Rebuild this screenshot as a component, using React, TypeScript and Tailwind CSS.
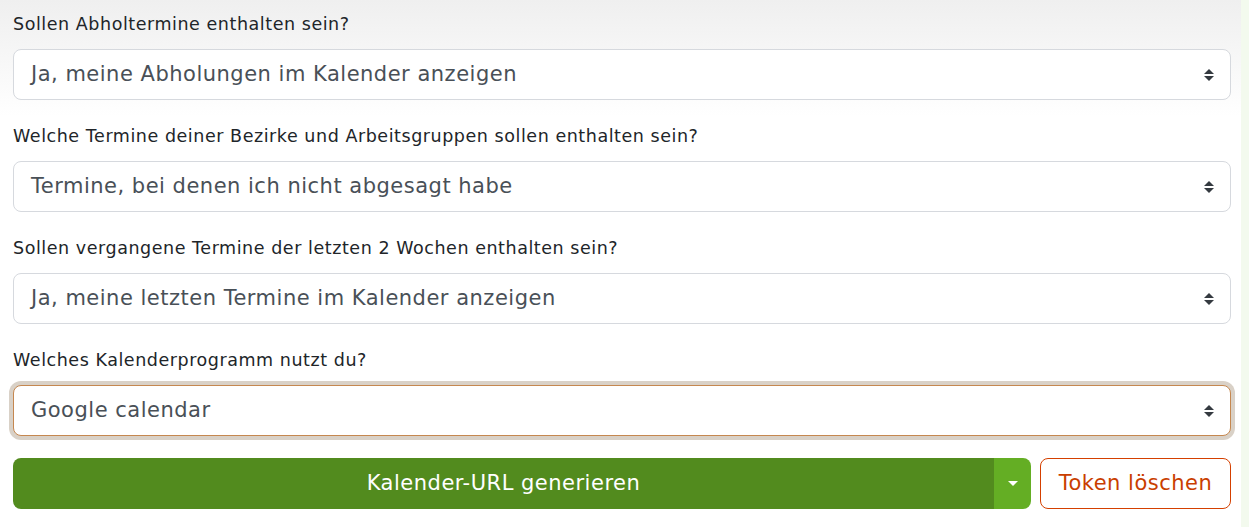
import React from "react";

type SelectFieldProps = {
  label: string;
  value: string;
  focused?: boolean;
};

const Caret = () => (
  <svg width="12" height="14" viewBox="0 0 12 14" className="shrink-0">
    <path d="M1 6 L6 1 L11 6 Z" fill="#343a40" />
    <path d="M1 8 L6 13 L11 8 Z" fill="#343a40" />
  </svg>
);

const SelectField: React.FC<SelectFieldProps> = ({ label, value, focused }) => {
  return (
    <div className="mb-[12px]">
      <div className="text-[17.5px] tracking-[0.55px] leading-[24px] text-[#212529] mb-[13px] pt-[12px]">{label}</div>
      <div
        className={
          focused
            ? "h-[51px] flex items-center justify-between pl-[17px] pr-[15px] rounded-[8px] border border-[#c5874f] bg-white shadow-[0_0_0_4px_#d9d1c7] text-[21px] tracking-[0.5px] text-[#495057]"
            : "h-[51px] flex items-center justify-between pl-[17px] pr-[15px] rounded-[8px] border border-[#d6d9de] bg-white text-[21px] tracking-[0.5px] text-[#495057]"
        }
      >
        <span>{value}</span>
        <Caret />
      </div>
    </div>
  );
};

export default function App() {
  return (
    <div
      className="w-[1249px] h-[527px] flex bg-[#f3faee] overflow-hidden"
      style={{ fontFamily: '"DejaVu Sans", "Open Sans", sans-serif' }}
    >
      <div className="w-[1241px] h-full bg-gradient-to-b from-[#efefef] via-white to-white via-[22%]">
        <div className="pl-[13px] pr-[10px]">
          <SelectField
            label="Sollen Abholtermine enthalten sein?"
            value="Ja, meine Abholungen im Kalender anzeigen"
          />
          <SelectField
            label="Welche Termine deiner Bezirke und Arbeitsgruppen sollen enthalten sein?"
            value="Termine, bei denen ich nicht abgesagt habe"
          />
          <SelectField
            label="Sollen vergangene Termine der letzten 2 Wochen enthalten sein?"
            value="Ja, meine letzten Termine im Kalender anzeigen"
          />
          <SelectField
            label="Welches Kalenderprogramm nutzt du?"
            value="Google calendar"
            focused
          />
          <div className="flex gap-[9px] mt-[22px]">
            <div className="flex flex-1 h-[51px] rounded-[8px] overflow-hidden">
              <button className="flex-1 bg-[#528b1e] text-white text-[21px] tracking-[0.5px]">Kalender-URL generieren</button>
              <button className="w-[37px] bg-[#64ae24] flex items-center justify-center">
                <svg width="12" height="7" viewBox="0 0 12 7">
                  <path d="M1 1 L11 1 L6 6 Z" fill="white" />
                </svg>
              </button>
            </div>
            <button className="w-[191px] h-[51px] rounded-[8px] border border-[#d44000] text-[#c93e00] text-[21px] tracking-[0.5px] bg-white">
              Token löschen
            </button>
          </div>
        </div>
      </div>
    </div>
  );
}
